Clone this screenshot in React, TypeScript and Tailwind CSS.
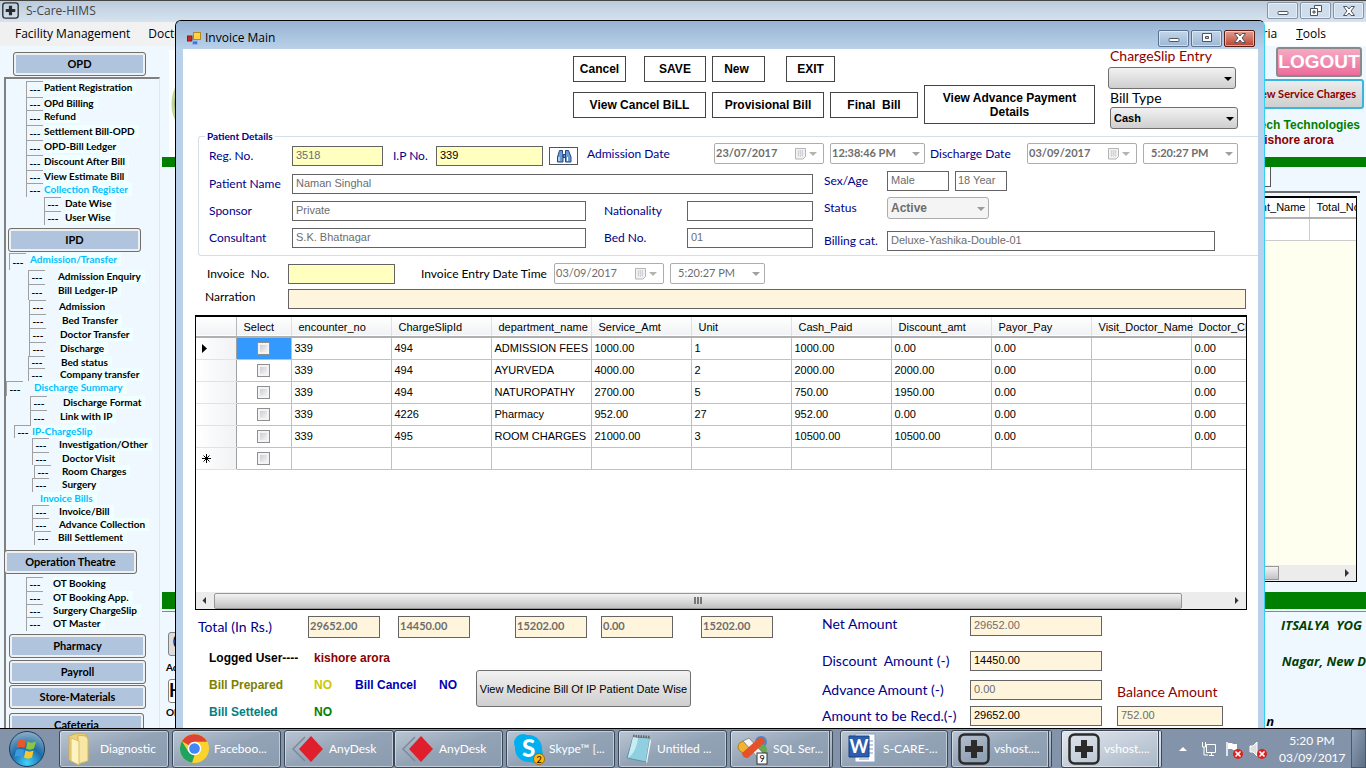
import React from 'react';
import { X } from 'lucide-react';

const CALIBRI = "font-['Lato','Liberation_Sans',sans-serif]";
const ARIAL = "font-['Liberation_Sans',sans-serif]";
const SEGOE = "font-['Open_Sans','Noto_Sans',sans-serif]";

interface TreeItem {
  label: string;
  row: string;
  gap?: string;
  group?: boolean;
  noBox?: boolean;
}

const opdItems: TreeItem[] = [
  { label: 'Patient Registration', row: 'h-4 pl-[22px]' },
  { label: 'OPd Billing', row: 'h-[13px] pl-[22px]' },
  { label: 'Refund', row: 'h-[15px] pl-[22px]' },
  { label: 'Settlement Bill-OPD', row: 'h-[15px] pl-[22px]' },
  { label: 'OPD-Bill Ledger', row: 'h-[15px] pl-[22px]' },
  { label: 'Discount After Bill', row: 'h-[15px] pl-[22px]' },
  { label: 'View Estimate Bill', row: 'h-[13px] pl-[22px]' },
  { label: 'Collection Register', row: 'h-[14px] pl-[22px]', group: true },
  { label: 'Date Wise', row: 'h-[14px] pl-10', gap: 'pl-1' },
  { label: 'User Wise', row: 'h-[14px] pl-10', gap: 'pl-1' },
];

const ipdItems: TreeItem[] = [
  { label: 'Admission/Transfer', row: 'h-[17px] pl-[5px]', gap: 'pl-1', group: true },
  { label: 'Admission Enquiry', row: 'h-[14px] pl-6', gap: 'pl-[13px]' },
  { label: 'Bill Ledger-IP', row: 'h-4 pl-6', gap: 'pl-[13px]' },
  { label: 'Admission', row: 'h-[14px] pl-[25px]', gap: 'pl-[13px]' },
  { label: 'Bed Transfer', row: 'h-[14px] pl-[25px]', gap: 'pl-4' },
  { label: 'Doctor Transfer', row: 'h-[14px] pl-[25px]', gap: 'pl-[14px]' },
  { label: 'Discharge', row: 'h-[14px] pl-[25px]', gap: 'pl-[14px]' },
  { label: 'Bed status', row: 'h-3 pl-6', gap: 'pl-4' },
  { label: 'Company transfer', row: 'h-[13px] pl-6', gap: 'pl-[15px]' },
  { label: 'Discharge Summary', row: 'h-[15px] pl-0.5', gap: 'pl-[11px]', group: true },
  { label: 'Discharge Format', row: 'h-[14px] pl-[26px]', gap: 'pl-4' },
  { label: 'Link with IP', row: 'h-[15px] pl-[26px]', gap: 'pl-[13px]' },
  { label: 'IP-ChargeSlip', row: 'h-[13px] pl-2.5', gap: 'pl-px', group: true },
  { label: 'Investigation/Other', row: 'h-[14px] pl-7', gap: 'pl-2.5' },
  { label: 'Doctor Visit', row: 'h-[13px] pl-7', gap: 'pl-[13px]' },
  { label: 'Room Charges', row: 'h-[13px] pl-[30px]', gap: 'pl-[11px]' },
  { label: 'Surgery', row: 'h-[14px] pl-7', gap: 'pl-[13px]' },
  { label: 'Invoice Bills', row: 'h-[13px] pl-9', gap: 'pl-0', group: true, noBox: true },
  { label: 'Invoice/Bill', row: 'h-[13px] pl-7', gap: 'pl-2.5' },
  { label: 'Advance Collection', row: 'h-[13px] pl-7', gap: 'pl-2.5' },
  { label: 'Bill Settlement', row: 'h-[14px] pl-[30px]', gap: 'pl-[7px]' },
];

const otItems: TreeItem[] = [
  { label: 'OT Booking', row: 'h-[14px] pl-[22px]', gap: 'pl-[10px]' },
  { label: 'OT Booking App.', row: 'h-[13px] pl-[22px]', gap: 'pl-[10px]' },
  { label: 'Surgery ChargeSlip', row: 'h-[13px] pl-[22px]', gap: 'pl-[10px]' },
  { label: 'OT Master', row: 'h-[14px] pl-[22px]', gap: 'pl-[10px]' },
];

const columns = [
  'encounter_no', 'ChargeSlipId', 'department_name', 'Service_Amt', 'Unit',
  'Cash_Paid', 'Discount_amt', 'Payor_Pay', 'Visit_Doctor_Name', 'Doctor_Charge',
];

const rows = [
  ['339', '494', 'ADMISSION FEES', '1000.00', '1', '1000.00', '0.00', '0.00', '', '0.00'],
  ['339', '494', 'AYURVEDA', '4000.00', '2', '2000.00', '2000.00', '0.00', '', '0.00'],
  ['339', '494', 'NATUROPATHY', '2700.00', '5', '750.00', '1950.00', '0.00', '', '0.00'],
  ['339', '4226', 'Pharmacy', '952.00', '27', '952.00', '0.00', '0.00', '', '0.00'],
  ['339', '495', 'ROOM CHARGES', '21000.00', '3', '10500.00', '10500.00', '0.00', '', '0.00'],
  ['', '', '', '', '', '', '', '', '', ''],
];

const Caret = ({ className }: { className: string }) => (
  <svg viewBox="0 0 8 4" className={`h-1 w-2 shrink-0 ${className}`}>
    <path d="M0 0h8L4 4z" fill="currentColor" />
  </svg>
);

const NavButton = ({ label, className }: { label: string; className: string }) => (
  <button
    className={`flex shrink-0 items-center justify-center rounded-[3px] border border-[#707070] bg-[#b0c4de] text-[11px] font-bold text-black shadow-[inset_0_0_0_2px_#f0f0f0] ${className}`}
  >
    {label}
  </button>
);

const Tree = ({ items }: { items: TreeItem[] }) => (
  <ul>
    {items.map((item) => (
      <li key={item.label} className={`flex whitespace-nowrap ${item.row}`}>
        {!item.noBox && (
          <span className="flex w-[17px] shrink-0 items-center justify-center border-l border-t border-[#a0a0a0] text-[10px] font-bold">
            ---
          </span>
        )}
        <span className={item.gap ?? 'pl-px'}>
          <a
            href="#"
            className={`block bg-[#f0ffff] pr-1 text-[10px] font-bold leading-[13px] ${item.group ? 'text-[#00bfff]' : 'text-black'}`}
          >
            {item.label}
          </a>
        </span>
      </li>
    ))}
  </ul>
);

const Sidebar = () => (
  <nav className="flex w-[160px] shrink-0 flex-col overflow-hidden pt-1.5">
    <NavButton label="OPD" className="ml-[13px] h-6 w-[133px]" />
    <div className="ml-1 mt-px flex flex-col border-l-2 border-r border-t-2 border-l-[#808080] border-r-[#dfe6ec] border-t-[#808080] pt-0.5">
      <div className="-ml-0.5">
        <Tree items={opdItems} />
        <NavButton label="IPD" className="mb-px ml-1 mt-[3px] h-6 w-[133px]" />
        <Tree items={ipdItems} />
        <NavButton label="Operation Theatre" className="mb-[3px] mt-[5px] h-6 w-[133px]" />
        <Tree items={otItems} />
        <NavButton label="Pharmacy" className="ml-[5px] mt-[3px] h-6 w-[137px]" />
        <NavButton label="Payroll" className="ml-[5px] mt-0.5 h-6 w-[137px]" />
        <NavButton label="Store-Materials" className="ml-[5px] mt-px h-6 w-[137px]" />
        <NavButton label="Cafeteria" className="ml-[5px] mt-1 h-6 w-[135px]" />
      </div>
    </div>
  </nav>
);

const CaptionButton = ({ kind, className }: { kind: 'min' | 'max' | 'restore' | 'close'; className: string }) => (
  <button
    aria-label={kind}
    className={`flex h-[17px] w-[31px] items-center justify-center rounded-[2px] border shadow-[inset_0_0_0_1px_rgba(255,255,255,0.5)] ${className}`}
  >
    <svg viewBox="0 0 14 12" className="h-3 w-3.5" fill="#fff" stroke="#4b5563">
      {kind === 'min' && <rect x="2" y="6.5" width="10" height="3" rx="1" />}
      {kind === 'max' && <path fillRule="evenodd" d="M2.500 1.500h9v8h-9zM5.500 4.500h3v2h-3z" />}
      {kind === 'restore' && (
        <>
          <path d="M5.500 0.500h7v6h-7z" />
          <path fillRule="evenodd" d="M1.500 3.500h7v7h-7zM4 6h2v2h-2z" />
        </>
      )}
      {kind === 'close' && <path d="M1.500 1.500h3.500l2 2.500 2-2.500h3.500l-3.500 4.500 3.500 4.500h-3.500l-2-2.500-2 2.500h-3.500l3.500-4.500z" />}
    </svg>
  </button>
);

const CrossIcon = ({ className }: { className: string }) => (
  <svg viewBox="0 0 32 32" className={className}>
    <rect x="1.500" y="1.500" width="29" height="29" rx="5" fill="none" stroke="#2b2b2b" strokeWidth="2.500" />
    <path d="M13 7h6v6h6v6h-6v6h-6v-6H7v-6h6z" fill="#2b2b2b" />
  </svg>
);

const Label = ({ id, className, children }: { id: string; className: string; children: string }) => (
  <label htmlFor={id} className={`shrink-0 whitespace-pre text-xs ${className}`}>
    {children}
  </label>
);

const TextBox = ({ id, value = '', className }: { id: string; value?: string; className: string }) => (
  <input id={id} defaultValue={value} className={`h-5 border border-[#646464] px-[3px] pb-0.5 text-[11px] outline-none ${ARIAL} ${className}`} />
);

const DateBox = ({ id, value, className = '' }: { id: string; value: string; className?: string }) => (
  <div className={`flex h-[21px] w-[110px] shrink-0 items-center rounded-[2px] border border-[#adadad] pr-1.5 text-[#6d6d6d] ${className}`}>
    <input id={id} aria-label={id} defaultValue={value} className="min-w-0 flex-1 pl-px outline-none" />
    <svg viewBox="0 0 12 12" className="mr-0.5 h-3 w-3 shrink-0">
      <path d="M.5.5h10v8l-2.500 2.500H.5z" fill="#f4f4f4" stroke="#b5b5b5" />
      <path d="M2.500 3h6M2.500 5h6M2.500 7h6M3.500 2v7M5.500 2v7M7.500 2v7" stroke="#c8c8d0" strokeWidth=".6" />
    </svg>
    <Caret className="text-[#b4b4ac]" />
  </div>
);

const TimeBox = ({ id, value, className = '' }: { id: string; value: string; className?: string }) => (
  <div className={`flex h-[21px] w-[95px] shrink-0 items-center rounded-[2px] border border-[#adadad] pr-1 text-[#6d6d6d] ${className}`}>
    <input id={id} aria-label={id} defaultValue={value} className="min-w-0 flex-1 pl-px outline-none" />
    <Caret className="text-[#a0a0a0]" />
  </div>
);

const SelectBox = ({ id, value, wrap, className }: { id: string; value: string; wrap: string; className: string }) => (
  <div className={`relative ${wrap}`}>
    <select id={id} aria-label={id} className={`block h-[22px] w-full appearance-none rounded-[3px] border pl-[3px] font-bold outline-none ${ARIAL} ${className}`}>
      <option>{value}</option>
    </select>
    <Caret className="pointer-events-none absolute right-1 top-[10px]" />
  </div>
);

const FlatButton = ({ label, className }: { label: string; className: string }) => (
  <button className={`shrink-0 border border-[#444] bg-white text-center text-xs font-bold leading-[14px] text-black ${ARIAL} ${className}`}>
    {label}
  </button>
);

const InvoiceToolbar = () => (
  <div className="flex justify-end pr-5">
    <div className="flex flex-col gap-[3px] pt-[7px]">
      <div className="flex">
        <FlatButton label="Cancel" className="h-[26px] w-[53px]" />
        <FlatButton label="SAVE" className="ml-[18px] h-[26px] w-[62px]" />
        <FlatButton label="New" className="ml-1.5 h-[26px] w-[53px] pr-1" />
        <FlatButton label="EXIT" className="ml-[21px] h-[26px] w-[49px]" />
      </div>
      <div className="flex items-center gap-1.5">
        <FlatButton label="View Cancel BiLL" className="h-[26px] w-[133px]" />
        <FlatButton label="Provisional Bill" className="h-[26px] w-[112px]" />
        <FlatButton label="Final  Bill" className="h-[26px] w-[88px] whitespace-pre" />
        <FlatButton label="View Advance Payment Details" className="h-[39px] w-[171px] px-3" />
      </div>
    </div>
    <div className="ml-[13px] flex w-[130px] flex-col text-sm leading-[14px]">
      <label htmlFor="chargeslip" className="h-[18px] pl-0.5 text-[#8b0000]">ChargeSlip Entry</label>
      <SelectBox id="chargeslip" value="" wrap="w-32" className="border-[#707070] bg-gradient-to-b from-[#f2f2f2] to-[#cfcfcf]" />
      <label htmlFor="billtype" className="h-[18px] pl-0.5 pt-0.5">Bill Type</label>
      <SelectBox id="billtype" value="Cash" wrap="ml-0.5 w-32" className="border-[#707070] bg-gradient-to-b from-[#f2f2f2] to-[#cfcfcf] text-[11px]" />
    </div>
  </div>
);

const PatientDetails = () => (
  <fieldset className="ml-[15px] h-[127px] rounded-l-[3px] border border-r-0 border-[#d5dfe5] pl-2.5 text-[#00008b]">
    <legend className="-ml-1 px-0.5 text-[10px] font-bold leading-[14px]">Patient Details</legend>
    <div className="flex h-[25px] items-center">
      <Label id="reg" className="w-[83px]">Reg. No.</Label>
      <TextBox id="reg" value="3518" className="w-[91px] bg-[#ffffc0] text-[#6d6d6d]" />
      <Label id="ip" className="ml-2.5 w-[43px]">I.P No.</Label>
      <TextBox id="ip" value="339" className="w-[107px] bg-[#ffffc0] text-black" />
      <button aria-label="Find" className="ml-1.5 flex h-[18px] w-[29px] items-center justify-center border border-[#555] bg-white">
        <svg viewBox="0 0 16 14" className="h-3.5 w-4" fill="#6f9bd1" stroke="#1f4788">
          <path d="M3.500 1.500h3v3l.500 1v7.500h-5.500v-5zM9.500 1.500h3l2.500 6.500v5h-5.500v-7.500zM7 5.500h2.500v3h-2.500z" />
          <path d="M3 8v4M11.500 8v4" stroke="#fff" />
        </svg>
      </button>
      <div className="flex items-center pb-1">
        <Label id="Admission date" className="ml-[9px] w-[127px]">Admission Date</Label>
        <div className="flex items-center gap-1.5 text-[11px] font-bold">
          <DateBox id="Admission date" value="23/07/2017" />
          <TimeBox id="Admission time" value="12:38:46 PM" />
        </div>
        <Label id="Discharge date" className="ml-[5px] w-[97px]">Discharge Date</Label>
        <div className="flex items-center gap-1.5 text-[11px] font-bold">
          <DateBox id="Discharge date" value="03/09/2017" />
          <TimeBox id="Discharge time" value="5:20:27 PM" className="pl-1.5" />
        </div>
      </div>
    </div>
    <div className="flex items-start gap-[11px] pt-[3px] text-[#6d6d6d]">
      <div className="mt-[3px] grid grid-cols-[83px_294px_18px_83px_126px] items-center gap-y-[7px]">
        <Label id="pname" className="text-[#00008b]">Patient Name</Label>
        <TextBox id="pname" value="Naman Singhal" className="col-span-4" />
        <Label id="sponsor" className="text-[#00008b]">Sponsor</Label>
        <TextBox id="sponsor" value="Private" className="w-full" />
        <Label id="nation" className="col-start-4 text-[#00008b]">Nationality</Label>
        <TextBox id="nation" className="w-full" />
        <Label id="consultant" className="text-[#00008b]">Consultant</Label>
        <TextBox id="consultant" value="S.K. Bhatnagar" className="w-full" />
        <Label id="bed" className="col-start-4 text-[#00008b]">Bed No.</Label>
        <TextBox id="bed" value="01" className="w-full" />
      </div>
      <div className="grid grid-cols-[63px_328px] items-center gap-y-1.5">
        <Label id="sex" className="text-[#00008b]">Sex/Age</Label>
        <div className="flex gap-1.5">
          <TextBox id="sex" value="Male" className="w-[62px]" />
          <input aria-label="Age" defaultValue="18 Year" className={`h-5 w-[52px] border border-[#646464] px-0.5 pb-0.5 text-[11px] ${ARIAL}`} />
        </div>
        <Label id="status" className="text-[#00008b]">Status</Label>
        <SelectBox id="status" value="Active" wrap="w-[102px] text-[#9a9a9a]" className="border-[#adadad] bg-[#f4f4f4] text-xs text-[#6d6d6d]" />
        <Label id="billcat" className="mt-1.5 text-[#00008b]">Billing cat.</Label>
        <TextBox id="billcat" value="Deluxe-Yashika-Double-01" className="mt-1.5 w-full" />
      </div>
    </div>
  </fieldset>
);

const ChargesGrid = () => (
  <div className={`ml-3 mr-[11px] mt-1.5 flex h-[295px] flex-col border border-t-2 border-black bg-white text-[11px] ${ARIAL}`}>
    <div className="flex-1 overflow-hidden">
      <table className="w-[1095px] table-fixed border-collapse">
        <colgroup>
          <col className="w-10" />
          <col className="w-[55px]" />
          {columns.map((c) => <col key={c} className="w-[100px]" />)}
        </colgroup>
        <thead>
          <tr className="h-5 border-b-2 border-[#b0b0b0] bg-gradient-to-b from-white to-[#f1f2f4] text-left">
            <th className="border-r border-[#b8b8b8]"></th>
            <th className="border-r border-[#e0e0e0] pl-[7px] pt-0.5 font-normal">Select</th>
            {columns.map((c) => (
              <th key={c} className="whitespace-nowrap border-r border-[#e0e0e0] pl-[7px] pt-0.5 font-normal">{c}</th>
            ))}
          </tr>
        </thead>
        <tbody>
          {rows.map((row, i) => (
            <tr key={i} className="h-[22px]">
              <td className="border-b border-r border-b-[#e2e2e2] border-r-[#a0a0a0] bg-gradient-to-r from-white to-[#f1f2f4] pl-1">
                {i === 0 && <svg viewBox="0 0 5 9" className="ml-0.5 h-[9px] w-[5px]"><path d="M0 0l5 4.500L0 9z" /></svg>}
                {i === 5 && <svg viewBox="0 0 9 9" className="mx-0.5 h-[9px] w-[9px]" stroke="#000"><path d="M4.500 0v9M0 4.500h9M1.500 1.500l6 6M7.500 1.500l-6 6" /></svg>}
              </td>
              <td className={`border-b border-r border-[#b0c4de] ${i === 0 ? 'bg-[#3399ff]' : ''}`}>
                <input
                  type="checkbox"
                  aria-label={`Select row ${i + 1}`}
                  className="mx-auto block h-[13px] w-[13px] appearance-none border border-[#8e8f8f] bg-gradient-to-br from-[#bfc4cb] to-white shadow-[inset_0_0_0_2px_#f4f4f4]"
                />
              </td>
              {row.map((cell, j) => (
                <td key={j} className="whitespace-nowrap border-b border-r border-[#b0c4de] pl-[3px]">{cell}</td>
              ))}
            </tr>
          ))}
        </tbody>
      </table>
    </div>
    <div className="flex h-[17px] items-center bg-[#ececec]">
      <svg viewBox="0 0 18 9" className="h-[9px] w-[18px] shrink-0"><path d="M10 1v7L6.500 4.500z" fill="#333" /></svg>
      <div className="flex h-4 flex-1 items-center justify-center gap-px rounded-[2px] border border-[#979797] bg-gradient-to-b from-[#f3f3f3] via-[#dadada] to-[#c0c0c4]">
        <span className="h-[7px] w-0.5 bg-[#777]" />
        <span className="h-[7px] w-0.5 bg-[#777]" />
        <span className="h-[7px] w-0.5 bg-[#777]" />
      </div>
      <svg viewBox="0 0 64 9" className="h-[9px] w-16 shrink-0"><path d="M53 1v7l3.500-3.500z" fill="#333" /></svg>
    </div>
  </div>
);

const TotalBox = ({ id, value, className }: { id: string; value: string; className: string }) => (
  <input aria-label={id} defaultValue={value} className={`h-[22px] w-[72px] border border-[#646464] bg-[#fff5dc] px-px pb-1 text-[11px] font-bold text-[#6d6d6d] ${className}`} />
);

const InvoiceSummary = () => (
  <div className="flex pt-1.5">
    <div className="w-[639px] shrink-0">
      <div className="flex items-center pl-[15px]">
        <span className="w-[110px] text-sm text-[#00008b]">Total (In Rs.)</span>
        <TotalBox id="Total service" value="29652.00" className="" />
        <TotalBox id="Total paid" value="14450.00" className="ml-[18px]" />
        <TotalBox id="Total discount" value="15202.00" className="ml-[45px]" />
        <TotalBox id="Total payor" value="0.00" className="ml-3.5" />
        <TotalBox id="Total net" value="15202.00" className="ml-7" />
      </div>
      <div className={`flex pl-[26px] pt-3 text-xs font-bold leading-4 ${ARIAL}`}>
        <div className="grid w-[267px] grid-cols-[105px_41px_84px_37px] content-start gap-y-[11px]">
          <span>Logged User----</span>
          <span className="col-span-3 text-[#8b0000]">kishore arora</span>
          <span className="text-[#808000]">Bill Prepared</span>
          <span className="text-[#c8c800]">NO</span>
          <span className="text-[#0000b4]">Bill Cancel</span>
          <span className="text-[#0000b4]">NO</span>
          <span className="text-[#008080]">Bill Setteled</span>
          <span className="text-[#008000]">NO</span>
        </div>
        <button className="mt-5 h-[37px] w-[215px] whitespace-nowrap rounded-[3px] border border-[#707070] bg-gradient-to-b from-[#f2f2f2] to-[#cfcfcf] text-[11px] font-normal">
          View Medicine Bill Of IP Patient Date Wise
        </button>
      </div>
    </div>
    <div className="grid grid-cols-[148px_132px_15px_106px] content-start items-center text-sm leading-4 text-[#00008b]">
      <label htmlFor="net" className="pb-1">Net Amount</label>
      <TextBox id="net" value="29652.00" className="bg-[#fff5dc] text-[#6d6d6d]" />
      <label htmlFor="disc" className="col-start-1 mt-[15px] whitespace-pre">Discount  Amount (-)</label>
      <TextBox id="disc" value="14450.00" className="mt-[15px] bg-[#fff5dc] text-black" />
      <label htmlFor="adv" className="col-start-1 mt-[9px]">Advance Amount (-)</label>
      <TextBox id="adv" value="0.00" className="mt-[9px] bg-[#fff5dc] text-[#6d6d6d]" />
      <label htmlFor="bal" className="col-start-4 self-end whitespace-nowrap text-[#8b0000]">Balance Amount</label>
      <label htmlFor="recd" className="col-start-1 mt-1.5 whitespace-nowrap">Amount to be Recd.(-)</label>
      <TextBox id="recd" value="29652.00" className="mt-1.5 bg-[#fff5dc] text-black" />
      <TextBox id="bal" value="752.00" className="col-start-4 mt-1.5 bg-[#fff5dc] text-[#6d6d6d]" />
    </div>
  </div>
);

const InvoiceWindow = () => (
  <section className="absolute bottom-10 left-[175px] right-[101px] top-5 flex flex-col overflow-hidden rounded-t-md border border-b-0 border-black border-r-[#35d0ee] bg-[#b9d1ea]">
    <header className="flex h-7 shrink-0 items-center bg-gradient-to-b from-[#98b4d2] to-[#b9d1ea] pl-[11px] pr-[9px] pt-1.5">
      <svg viewBox="0 0 14 13" className="h-[13px] w-3.5">
        <rect x="0.500" y="4" width="4.500" height="5" fill="#c8281e" stroke="#8a1a12" />
        <rect x="6.500" y="0.500" width="7" height="7" fill="#ffd24a" stroke="#b48a1e" />
        <rect x="5.500" y="9" width="5" height="3.500" fill="#3c78dc" stroke="#8fb4ee" />
      </svg>
      <h1 className={`ml-1 flex-1 text-xs ${SEGOE}`}>Invoice Main</h1>
      <div className="flex gap-0.5">
        <CaptionButton kind="min" className="border-[#5a7290] bg-gradient-to-b from-[#c3d6ea] to-[#9db7d3]" />
        <CaptionButton kind="max" className="border-[#5a7290] bg-gradient-to-b from-[#c3d6ea] to-[#9db7d3]" />
        <CaptionButton kind="close" className="border-[#5c1a14] bg-gradient-to-b from-[#e0a093] to-[#b8402c]" />
      </div>
    </header>
    <div className="ml-[7px] mr-1.5 flex-1 overflow-hidden bg-white">
      <InvoiceToolbar />
      <PatientDetails />
      <div className="mt-[7px] flex items-center pl-6">
        <Label id="invno" className="w-[81px]">Invoice  No.</Label>
        <TextBox id="invno" className="w-[107px] bg-[#ffffc0]" />
        <Label id="Entry date" className="ml-[26px] w-[133px]">Invoice Entry Date Time</Label>
        <div className="flex gap-1.5 text-[11px]">
          <DateBox id="Entry date" value="03/09/2017" />
          <TimeBox id="Entry time" value="5:20:27 PM" className="pl-1.5" />
        </div>
      </div>
      <div className="mt-[5px] flex items-center pl-[22px] pr-3">
        <Label id="narration" className="w-[83px] pb-1">Narration</Label>
        <TextBox id="narration" className="flex-1 bg-[#fff5dc]" />
      </div>
      <ChargesGrid />
      <InvoiceSummary />
    </div>
  </section>
);

const Background = () => (
  <main className="flex min-w-0 flex-1 flex-col overflow-hidden pl-0.5">
    <div className="flex h-[111px] shrink-0 justify-between">
      <div className="ml-[7px] mt-1 flex w-40 items-center bg-white pl-0.5">
        <svg viewBox="0 0 40 60" className="h-16 w-10"><ellipse cx="22" cy="30" rx="20" ry="28" fill="#6d8c3a" stroke="#c5d69a" strokeWidth="3" /></svg>
      </div>
      <div className="flex flex-col items-end pr-0.5 pt-px">
        <button className={`mr-0.5 h-[30px] w-[86px] rounded-[3px] border-2 border-[#8a8a8a] bg-gradient-to-b from-[#f5a9c4] to-[#ec6c9b] text-[19px] font-black leading-[24px] text-white ${ARIAL}`}>LOGOUT</button>
        <button className="mt-0.5 h-[30px] w-[124px] whitespace-nowrap rounded-[3px] border-2 border-[#3cb4e0] bg-gradient-to-b from-[#ececec] to-[#cfcfcf] pr-1.5 text-right text-[11px] font-bold text-[#8b0000]">View Service Charges</button>
        <div className={`mr-1 mt-[9px] text-xs font-bold leading-[15px] ${ARIAL}`}>
          <p className="text-[#008000]">tech Technologies</p>
          <p className="pl-0.5 text-[#8b0000]">kishore arora</p>
        </div>
      </div>
    </div>
    <div className="h-2.5 shrink-0 bg-[#008000]" />
    <div className="flex h-6 shrink-0 justify-end pr-[95px]">
      <span className="h-5 w-5 border border-t-0 border-[#555] bg-white" />
    </div>
    <div className="ml-auto mr-1.5 w-[200px] border-t-2 border-[#6e6e6e]" />
    <div className={`ml-auto mr-[9px] mt-[3px] flex h-[386px] w-[200px] shrink-0 flex-col border border-t-2 border-black bg-[#fffff0] text-[11px] ${ARIAL}`}>
      <table className="w-full table-fixed border-collapse">
        <thead>
          <tr className="h-5 border-b-2 border-[#b0b0b0] bg-white">
            <th className="w-[151px] whitespace-nowrap border-r border-[#ccc] pr-[3px] text-right font-normal">Patient_Name</th>
            <th className="overflow-hidden whitespace-nowrap pl-[7px] text-left font-normal">Total_No</th>
          </tr>
        </thead>
        <tbody>
          <tr className="h-[22px] border-b border-[#ccc] bg-white">
            <td className="border-r border-[#ccc]"></td>
            <td></td>
          </tr>
        </tbody>
      </table>
      <div className="mt-auto flex h-4 items-center bg-[#ececec]">
        <span className="h-3.5 w-[121px] border border-[#979797] bg-gradient-to-b from-[#f3f3f3] to-[#c4c4c8]" />
        <svg viewBox="0 0 6 8" className="ml-auto mr-1.5 h-2 w-1.5"><path d="M1 0v8l4-4z" fill="#333" /></svg>
      </div>
    </div>
    <div className="mt-2.5 h-[17px] shrink-0 bg-[#008000]" />
    <div className="mt-0.5 flex border-t border-[#888]">
      <div className="w-40 pl-1">
        <div className="ml-0.5 mt-5 h-6 w-20 rounded-[3px] border border-[#808080] bg-[#ddd] pl-1 text-[11px] font-bold">(</div>
        <p className="mt-1 text-[10px] font-bold">Address</p>
        <div className="ml-0.5 mt-1 h-6 w-20 rounded-[3px] border border-[#808080] bg-white text-lg font-bold leading-5">H</div>
        <p className="mt-0.5 text-[10px] font-bold">Old</p>
      </div>
      <div className={`ml-auto whitespace-pre pt-1 text-right text-[13px] font-bold italic leading-[18px] text-[#004000] ${SEGOE}`}>
        <p className="pr-1">ITSALYA  YOG</p>
        <p className="mt-[18px]">Nagar, New D</p>
        <p className="mt-[42px] pr-[92px] text-black">n</p>
      </div>
    </div>
  </main>
);

const TaskButton = ({ icon, label, className, active }: { icon: React.ReactNode; label: string; className: string; active?: boolean }) => (
  <button
    className={`flex h-[38px] min-w-0 items-center rounded-[3px] border border-[#3c4858] px-1.5 shadow-[inset_0_0_0_1px_rgba(255,255,255,0.45)] ${
      active ? 'bg-gradient-to-br from-[#e2e7ee] to-[#a9b7c7]' : 'bg-gradient-to-br from-[#b9c5d2] via-[#93a3b6] to-[#8b9cb0]'
    } ${className}`}
  >
    {icon}
    <span className="ml-1 flex-1 whitespace-nowrap text-left text-white">{label}</span>
  </button>
);

const AnyDeskIcon = () => (
  <svg viewBox="0 0 34 30" className="h-[30px] w-[34px] shrink-0">
    <path d="M14 3L2 15l12 12" fill="none" stroke="#7f8994" strokeWidth="1.500" />
    <path d="M20 2l12 13-12 13L8 15z" fill="#e01f2d" />
  </svg>
);

const FolderIcon = () => (
  <svg viewBox="0 0 30 36" className="h-9 w-[30px] shrink-0">
    <path d="M3 5l9-3 8 1v26l-8 3-9-3z" fill="#ecd27c" stroke="#cfae50" />
    <path d="M12 4l8 1 2 3v22l-10 3z" fill="#f8e7a4" stroke="#d3b350" />
    <path d="M5 7l8 3v24l-8-4z" fill="#fdf3c2" stroke="#d8bd62" />
  </svg>
);

const ChromeIcon = () => (
  <svg viewBox="0 0 32 32" className="h-[31px] w-[31px] shrink-0">
    <circle cx="16" cy="16" r="15" fill="#fbd22e" />
    <path d="M16 16L3 8.500A15 15 0 0 1 29 9H16z" fill="#dd4436" />
    <path d="M3 8.500L9.900 19.500 16 23l-2.500 7.800A15 15 0 0 1 3 8.500z" fill="#1da462" />
    <circle cx="16" cy="16" r="7" fill="#fff" />
    <circle cx="16" cy="16" r="5.500" fill="#4285f4" />
  </svg>
);

const SkypeIcon = () => (
  <svg viewBox="0 0 32 32" className="h-8 w-8 shrink-0">
    <circle cx="10" cy="10" r="9" fill="#00aff0" />
    <circle cx="21" cy="21" r="9" fill="#00aff0" />
    <circle cx="15.500" cy="15.500" r="13.500" fill="#00aff0" />
    <text x="15.500" y="24" textAnchor="middle" fontSize="24" fontWeight="900" fill="#fff">S</text>
    <circle cx="26" cy="26" r="5.500" fill="#fdb913" stroke="#a06a00" />
    <text x="26" y="29.500" textAnchor="middle" fontSize="9" fill="#000">2</text>
  </svg>
);

const NotepadIcon = () => (
  <svg viewBox="0 0 28 32" className="h-8 w-7 shrink-0">
    <path d="M8 4l17 1-4 24L2 25z" fill="#8fcfdf" stroke="#5e93a3" />
    <path d="M25 5l1 3-4 22-1-1z" fill="#f6f6f6" />
    <path d="M8 3l17 1" stroke="#666" strokeWidth="2.500" strokeDasharray="1.500 1" />
    <path d="M3 25C10 20 12 12 13 5l-5-1z" fill="#c9ecf3" />
  </svg>
);

const SqlIcon = () => (
  <svg viewBox="0 0 32 32" className="h-8 w-8 shrink-0">
    <ellipse cx="8" cy="14" rx="7" ry="6" fill="#f2b233" stroke="#b87d12" />
    <circle cx="24" cy="9" r="6" fill="#4e86c6" />
    <circle cx="24" cy="17" r="6" fill="#6aa84f" />
    <path d="M6 8l6-3 14 15-5 5z" fill="#f4f4f4" stroke="#888" />
    <path d="M22 5q5-1 6 4L11 25q-6 0-6-5z" fill="#e5512b" />
    <rect x="20" y="20" width="10" height="11" fill="#fff" stroke="#333" />
    <text x="25" y="29" textAnchor="middle" fontSize="9" fill="#000">9</text>
  </svg>
);

const WordIcon = () => (
  <svg viewBox="0 0 32 32" className="h-8 w-8 shrink-0">
    <path d="M8 1h20v28H8z" fill="#fff" stroke="#8aa5cc" />
    <path d="M20 8h6M20 12h6M20 16h6M20 20h6M12 26h10" stroke="#7e9ccb" />
    <path d="M2 3h20v21H2z" fill="#2b5eb0" stroke="#17407f" />
    <text x="12" y="20" textAnchor="middle" fontSize="18" fontWeight="700" fill="#fff">W</text>
  </svg>
);

const StartOrb = () => (
  <svg viewBox="0 0 38 38" className="h-[38px] w-[38px]">
    <defs>
      <radialGradient id="orb" cx="50%" cy="90%" r="90%">
        <stop offset="0" stopColor="#3fd4ff" />
        <stop offset=".5" stopColor="#1b6ca8" />
        <stop offset="1" stopColor="#8fb0c8" />
      </radialGradient>
    </defs>
    <circle cx="19" cy="19" r="17.500" fill="url(#orb)" stroke="#1d3b57" />
    <path d="M10 11c3-2 5-1.500 8 0l-1.500 7c-3-1.500-5-1.500-8 0z" fill="#e8562a" />
    <path d="M19.500 11.500c3 1.500 5 1.500 8.500 0l-2 7c-3 1.500-5 1.500-8 0z" fill="#8cc63e" />
    <path d="M8 20c3-1.500 5-1.500 8 0l-1.500 7c-3-1.500-5-1.500-8 0z" fill="#3c9be0" />
    <path d="M17.500 20.500c3 1.500 5 1.500 8 0l-1.500 7c-3 1.500-5 1.500-8 0z" fill="#fdc52c" />
  </svg>
);

const RedBadge = () => (
  <span className="absolute -bottom-0.5 -right-1 flex h-2.5 w-2.5 items-center justify-center rounded-full bg-[#d9231c]">
    <X className="h-2 w-2 text-white" strokeWidth={5} />
  </span>
);

const Taskbar = () => (
  <footer className={`absolute inset-x-0 bottom-0 flex h-10 items-center border-t border-black bg-[#8394aa] pl-2 text-xs ${CALIBRI}`}>
    <button aria-label="Start" className="mr-[13px] shrink-0"><StartOrb /></button>
    <div className="flex gap-[3px]">
      <TaskButton icon={<FolderIcon />} label="Diagnostic" className="w-[110px]" />
      <TaskButton icon={<ChromeIcon />} label="Faceboo..." className="w-[109px]" />
      <div className="flex">
        <TaskButton icon={<AnyDeskIcon />} label="AnyDesk" className="w-[110px]" />
        <TaskButton icon={<AnyDeskIcon />} label="AnyDesk" className="w-[109px]" />
      </div>
      <TaskButton icon={<SkypeIcon />} label="Skype™ [..." className="w-[109px]" />
      <TaskButton icon={<NotepadIcon />} label="Untitled ..." className="w-[109px]" />
      <TaskButton icon={<SqlIcon />} label="SQL Ser..." className="w-[103px] border-r-4 border-double" />
      <TaskButton icon={<WordIcon />} label="S-CARE-..." className="ml-1 w-[108px]" />
      <TaskButton icon={<CrossIcon className="h-8 w-8 shrink-0" />} label="vshost...." className="w-[101px] border-r-4 border-double" />
      <TaskButton icon={<CrossIcon className="h-8 w-8 shrink-0" />} label="vshost...." active className="ml-1.5 w-[101px] border-r-4 border-double" />
    </div>
    <div className="ml-auto flex h-full shrink-0 items-center">
      <svg viewBox="0 0 8 4" className="h-1 w-2"><path d="M0 4h8L4 0z" fill="#fff" /></svg>
      <svg viewBox="0 0 16 16" className="ml-3.5 h-4 w-4" fill="none" stroke="#fff">
        <path d="M5.500 3.500h9v8h-9zM8 14.500h5M10.500 12v2M1.500 1v5h3V1M3 6v8h4" />
      </svg>
      <span className="relative ml-2 h-4 w-3.5">
        <svg viewBox="0 0 14 16" className="h-4 w-3.5"><path d="M2 1v14" stroke="#fff" strokeWidth="1.500" /><path d="M3 2h4l1 1h4v6H8L7 8H3z" fill="#fff" /></svg>
        <RedBadge />
      </span>
      <span className="relative ml-2.5 h-4 w-3.5">
        <svg viewBox="0 0 14 16" className="h-4 w-3.5"><path d="M1 5h3l4-4v14l-4-4H1z" fill="#ddd" stroke="#fff" /></svg>
        <RedBadge />
      </span>
      <time className="ml-4 w-[66px] text-center leading-[17px] text-white">5:20 PM<br />03/09/2017</time>
      <button aria-label="Show desktop" className="ml-1.5 h-full w-[15px] border border-[#49586a] bg-gradient-to-br from-[#8fa0b4] to-[#5d6f85]" />
    </div>
  </footer>
);

const App: React.FC = () => (
  <div className={`relative flex h-screen w-full flex-col overflow-hidden bg-[#f0f8ff] text-black ${CALIBRI}`}>
    <header className="flex h-[22px] shrink-0 items-center border-t border-[#444] bg-gradient-to-b from-[#bccbdc] to-[#d6e4f1] pb-0.5 pl-0.5 pr-0.5">
      <CrossIcon className="h-[17px] w-[17px]" />
      <span className={`ml-[7px] flex-1 text-xs text-[#444] ${SEGOE}`}>S-Care-HIMS</span>
      <div className="flex gap-0.5">
        <CaptionButton kind="min" className="border-[#8694a6] bg-[#cfdcea]" />
        <CaptionButton kind="restore" className="border-[#8694a6] bg-[#cfdcea]" />
        <CaptionButton kind="close" className="border-[#8694a6] bg-[#cfdcea]" />
      </div>
    </header>
    <nav className={`flex h-6 shrink-0 items-center bg-gradient-to-r from-[#f0f0f0] to-white pl-[15px] text-xs ${SEGOE}`}>
      <a href="#">Facility Management</a>
      <a href="#" className="ml-[18px]">Doctor</a>
      <a href="#" className="ml-auto">Cafeteria</a>
      <a href="#" className="ml-[19px] mr-10"><u>T</u>ools</a>
    </nav>
    <div className="flex min-h-0 flex-1">
      <Sidebar />
      <Background />
    </div>
    <InvoiceWindow />
    <Taskbar />
  </div>
);

export default App;
